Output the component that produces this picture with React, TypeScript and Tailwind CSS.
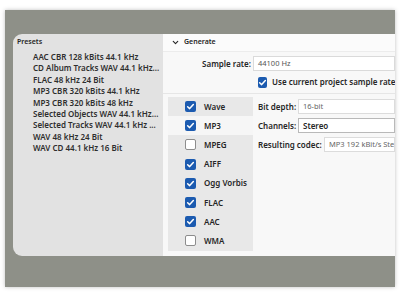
import { ChevronDown } from "lucide-react";

const presets = [
  "AAC CBR 128 kBits 44.1 kHz",
  "CD Album Tracks WAV 44.1 kHz...",
  "FLAC 48 kHz 24 Bit",
  "MP3 CBR 320 kBits 44.1 kHz",
  "MP3 CBR 320 kBits 48 kHz",
  "Selected Objects WAV 44.1 kHz...",
  "Selected Tracks WAV 44.1 kHz ...",
  "WAV 48 kHz 24 Bit",
  "WAV CD 44.1 kHz 16 Bit",
];

const formats = [
  { name: "Wave", on: true },
  { name: "MP3", on: true, active: true },
  { name: "MPEG", on: false },
  { name: "AIFF", on: true },
  { name: "Ogg Vorbis", on: true },
  { name: "FLAC", on: true },
  { name: "AAC", on: true },
  { name: "WMA", on: false },
];

function Check({ on }: { on: boolean }) {
  if (!on) {
    return <span className="block h-[11px] w-[11px] rounded-[2px] border border-[#8d8d8d] bg-white" />;
  }
  return (
    <span className="flex h-[11px] w-[11px] items-center justify-center rounded-[2px] bg-[#1c5bb0]">
      <svg viewBox="0 0 12 12" className="h-[9px] w-[9px]">
        <path d="M2.2 6.3 L4.9 8.8 L9.8 3.4" fill="none" stroke="white" strokeWidth="2" strokeLinecap="round" strokeLinejoin="round" />
      </svg>
    </span>
  );
}

export default function App() {
  return (
    <div className="h-[300px] w-[400px] overflow-hidden bg-white pt-[10px] pl-[5px] font-['Noto_Sans','Open_Sans',sans-serif] text-[#262626]">
      <div className="h-[277px] w-[390px] overflow-hidden bg-[#8e9088] pt-[24px] pl-[8px] shadow-[0_0_4px_rgba(0,0,0,0.25)]">
        <div className="flex h-[222px]">
          {/* Presets */}
          <div className="w-[150px] rounded-l-[9px] bg-[#e2e2e2] pt-[3px] pl-[4px]">
            <div className="text-[7px] font-semibold leading-[10px]">Presets</div>
            <ul className="mt-[4px] pl-[16px]">
              {presets.map((p) => (
                <li key={p} className="whitespace-nowrap text-[8px] font-semibold leading-[11.4px] text-[#2e2e2e]">
                  {p}
                </li>
              ))}
            </ul>
          </div>

          {/* Generate */}
          <div className="min-w-0 flex-1 overflow-hidden bg-[#f8f8f8]">
            <div className="flex h-[18px] items-center gap-[4px] border-b border-[#ececec] bg-[#fbfbfb] pl-[8px]">
              <ChevronDown className="h-[9px] w-[9px]" strokeWidth={3} />
              <span className="text-[7px] font-semibold">Generate</span>
            </div>

            <div className="mt-[4px] flex h-[15px] items-center">
              <span className="w-[90px] pr-[2px] text-right text-[8px] font-semibold">Sample rate:</span>
              <div className="flex h-[15px] flex-1 items-center border border-[#dadada] bg-white pl-[4px] text-[7.5px] text-[#555]">
                44100 Hz
              </div>
            </div>

            <div className="mt-[5px] flex h-[12px] items-center gap-[5px] pl-[95px]">
              <Check on />
              <span className="whitespace-nowrap text-[8px] font-semibold">Use current project sample rate</span>
            </div>

            <div className="mt-[5px] flex border-t border-[#e6e6e6] pt-[3px]">
              <div className="ml-[5px] w-[85px] bg-[#e8e8e8]">
                {formats.map((f) => (
                  <div
                    key={f.name}
                    className={`flex h-[19.2px] items-center gap-[8px] pl-[17px] ${f.active ? "bg-[#f6f6f6]" : ""}`}
                  >
                    <Check on={f.on} />
                    <span className="whitespace-nowrap text-[8px] font-semibold">{f.name}</span>
                  </div>
                ))}
              </div>

              <div className="min-w-0 flex-1 pl-[5px]">
                <div className="flex h-[19.2px] items-center">
                  <span className="w-[40px] text-[8px] font-semibold">Bit depth:</span>
                  <div className="flex h-[15px] flex-1 items-center border border-[#dcdcdc] bg-white pl-[4px] text-[7.5px] text-[#666]">
                    16-bit
                  </div>
                </div>
                <div className="flex h-[19.2px] items-center">
                  <span className="w-[40px] text-[8px] font-semibold">Channels:</span>
                  <div className="flex h-[15px] flex-1 items-center border border-[#b9b9b9] bg-white pl-[4px] text-[8px] font-semibold">
                    Stereo
                  </div>
                </div>
                <div className="flex h-[19.2px] items-center">
                  <span className="w-[66px] whitespace-nowrap text-[8px] font-semibold">Resulting codec:</span>
                  <div className="flex h-[15px] flex-1 items-center overflow-hidden whitespace-nowrap border border-[#dcdcdc] bg-white pl-[4px] text-[7.5px] text-[#666]">
                    MP3 192 kBit/s Stereo
                  </div>
                </div>
              </div>
            </div>
          </div>
        </div>
      </div>
    </div>
  );
}
